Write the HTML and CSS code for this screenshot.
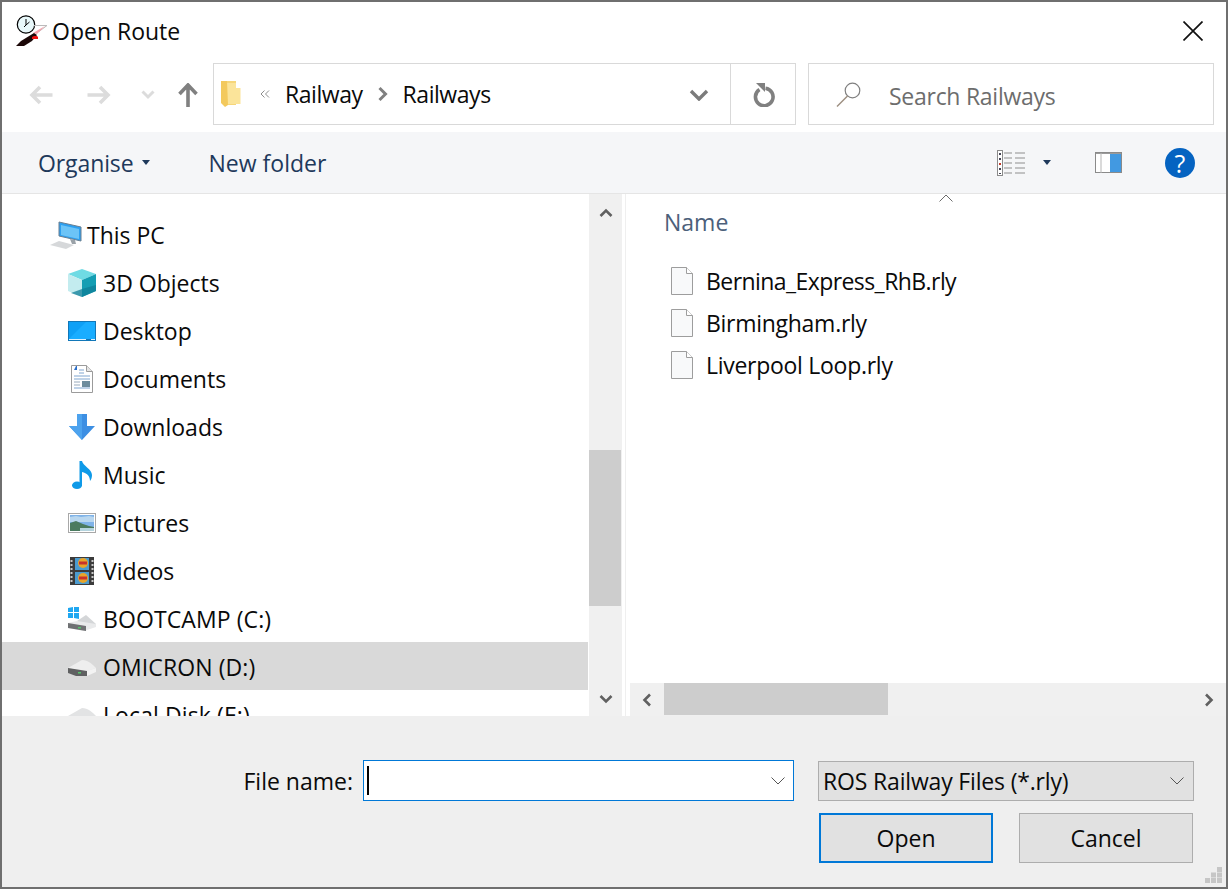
FILE: index.html
```html
<!DOCTYPE html>
<html>
  <head>
    <meta charset="utf-8">
    <title>Open Route</title>
    <link rel="stylesheet" href="styles.css">
  </head>
  <body>
    <div class="window">
      <header class="titlebar">
        <svg class="app-icon" width="32" height="32" viewBox="0 0 32 32">
          <circle cx="10" cy="9.500" r="8.700" fill="#e8f8fa" stroke="#000" stroke-width="1.200"/>
          <path d="M10 4v6l-2 2M10 10l3.500-3" stroke="#000" fill="none"/>
          <path d="M18 10.500h13l-8 6" fill="#fff" stroke="#bbb"/>
          <path d="M29 11l-8 8-4-1z" fill="#f5a3ad"/>
          <path d="M0 31l5-5 13-8 3 2-5 6-8 5z" fill="#1c0808"/>
          <path d="M18 21h3l1 1v2h-6v-2z" fill="#f01010"/>
        </svg>
        <span class="title">Open Route</span>
        <svg class="close" width="20" height="20" viewBox="0 0 20 20">
          <path d="M.5.500l19 19M19.500.500l-19 19" stroke="#111" stroke-width="1.700" fill="none"/>
        </svg>
      </header>

      <div class="navbar">
        <svg class="nav-arrow back" width="24" height="20" viewBox="0 0 24 20">
          <path d="M11 2l-8 8 8 8M3.500 10h20" stroke="#dcdcdc" stroke-width="3.600" fill="none"/>
        </svg>
        <svg class="nav-arrow forward" width="24" height="20" viewBox="0 0 24 20">
          <path d="M13 2l8 8-8 8M20.500 10H.5" stroke="#dcdcdc" stroke-width="3.600" fill="none"/>
        </svg>
        <svg class="nav-arrow recent" width="14" height="10" viewBox="0 0 14 10">
          <path d="M1.500 1.500L7 7l5.500-5.500" stroke="#dcdcdc" stroke-width="3" fill="none"/>
        </svg>
        <svg class="nav-arrow up" width="20" height="24" viewBox="0 0 20 24">
          <path d="M1.500 11L10 2l8.500 9M10 3v21" stroke="#808080" stroke-width="3.600" fill="none"/>
        </svg>

        <div class="address">
          <svg class="crumb-folder" width="20" height="28" viewBox="0 0 20 28">
            <path d="M0 1h15v24H4l-4-3z" fill="#f6d67a"/>
            <path d="M6 3h9v5h4.500v16H6z" fill="#fbe49a"/>
            <path d="M0 1h6l1 24-3 2-4-4z" fill="#f3c95d"/>
          </svg>
          <svg class="crumb-more" width="10" height="8" viewBox="0 0 10 8">
            <path d="M4.500.5L1 4l3.500 3.500M9 .5L5.500 4 9 7.500" stroke="#8d8d8d" fill="none"/>
          </svg>
          <span class="crumb">Railway</span>
          <svg class="crumb-sep" width="12" height="16" viewBox="0 0 12 16">
            <path d="M2.500 2l6 6-6 6" stroke="#808080" stroke-width="3" fill="none"/>
          </svg>
          <span class="crumb">Railways</span>
          <svg class="address-drop" width="20" height="12" viewBox="0 0 20 12">
            <path d="M2 2l8 8 8-8" stroke="#7b7b7b" stroke-width="3.400" fill="none"/>
          </svg>
          <div class="address-refresh">
            <svg width="22" height="24" viewBox="0 0 22 24">
              <path d="M6.500 6.500a8.800 8.800 0 1 0 6-1.300" stroke="#808080" stroke-width="3.600" fill="none"/>
              <path d="M3 0h9v9z" fill="#808080"/>
            </svg>
          </div>
        </div>

        <div class="search">
          <svg width="26" height="26" viewBox="0 0 26 26">
            <circle cx="16.500" cy="9.500" r="7.300" fill="none" stroke="#808080" stroke-width="1.200"/>
            <path d="M11.500 15L1 25.500" stroke="#9c8f80" stroke-width="1.400"/>
          </svg>
          <span class="search-text">Search Railways</span>
        </div>
      </div>

      <div class="toolbar">
        <span class="tool organise">Organise</span>
        <span class="tool-caret"></span>
        <span class="tool new-folder">New folder</span>
        <svg class="view-icon" width="28" height="26" viewBox="0 0 28 26">
          <rect x=".5" y=".5" width="5" height="25" fill="#fff" stroke="#8a8a8a"/>
          <path d="M2 3h2v2H2zM2 13h2v2H2zM2 18h2v2H2zM2 23h2v1H2zM2 8h2v2H2z" fill="#445"/>
          <path d="M2 13h2v2H2z" fill="#c0392b"/>
          <path d="M7 3h8M18 3h10M7 8h8M18 8h10M7 13h8M18 13h10M7 18h8M18 18h10M7 23h8M18 23h10" stroke="#8e8e8e" fill="none"/>
        </svg>
        <span class="tool-caret view-caret"></span>
        <svg class="pane-icon" width="28" height="22" viewBox="0 0 28 22">
          <rect x=".5" y=".5" width="26" height="20" fill="#fff" stroke="#8a8a8a"/>
          <rect x="15" y="2" width="11" height="18" fill="#4299e1"/>
          <rect x="1" y="1" width="25" height="1" fill="#9a9a9a"/>
          <path d="M6 1v20" stroke="#b5b5b5"/>
        </svg>
        <div class="help">?</div>
      </div>

      <main class="panes">
        <nav class="tree">
          <div class="tree-row root">
            <svg width="32" height="28" viewBox="0 0 32 28">
              <path d="M9 1l22 5v14L9 15z" fill="#2c9ff0" stroke="#6a7f90"/>
              <path d="M11 4l18 4v10l-18-4z" fill="#6cc4f7"/>
              <path d="M20 18l2 5h4l-1-4z" fill="#9aa2a8"/>
              <path d="M0 24l9-4 15 4-8 4z" fill="#d6d8da"/>
            </svg>
            <span>This PC</span>
          </div>
          <div class="tree-row">
            <svg width="28" height="28" viewBox="0 0 28 28">
              <path d="M14 0l14 5-14 6L0 5z" fill="#6fdbe4"/>
              <path d="M0 5l14 6v17L0 22z" fill="#c3ecef"/>
              <path d="M28 5l-14 6v17l14-6z" fill="#149eb3"/>
              <path d="M14 20l14-4v6l-14 6-11-4z" fill="#0d7d97" opacity=".75"/>
            </svg>
            <span>3D Objects</span>
          </div>
          <div class="tree-row">
            <svg width="28" height="20" viewBox="0 0 28 20">
              <rect width="28" height="20" fill="#1277b8"/>
              <rect x="1" y="1" width="26" height="17" fill="#0ea0f6"/>
              <path d="M1 18L18 1h9v17z" fill="#19adff"/>
              <path d="M1 18.500h17M23 18.500h4" stroke="#dff2ff"/>
            </svg>
            <span>Desktop</span>
          </div>
          <div class="tree-row">
            <svg width="22" height="28" viewBox="0 0 22 28">
              <path d="M.5.500h15l6 6v21H.5z" fill="#fff" stroke="#9b9b9b"/>
              <path d="M15.500.5v6h6" fill="#e4e4e4" stroke="#9b9b9b"/>
              <path d="M3 5l2-4h1v4z" fill="#2c6fc9"/>
              <path d="M8 5h5M8 8h5M3 11h16M3 14h16M3 23h16" stroke="#7fa5d0"/>
              <path d="M3 17h6M3 20h6" stroke="#9ab"/>
              <rect x="11" y="16" width="8" height="6" fill="#6e8d9d"/>
            </svg>
            <span>Documents</span>
          </div>
          <div class="tree-row">
            <svg width="26" height="26" viewBox="0 0 26 26">
              <path d="M8 0h10v12h8L13 26 0 12h8z" fill="#3d8fe3"/>
              <path d="M8 0h5v26L0 12h8z" fill="#4da3ee"/>
            </svg>
            <span>Downloads</span>
          </div>
          <div class="tree-row">
            <svg width="28" height="28" viewBox="0 0 28 28">
              <ellipse cx="9" cy="24.300" rx="5" ry="3.700" fill="#0f9ae8"/>
              <path d="M11.500 0H14c1 5 10 8 10 14 0 3-1 5-2 6 0-5-3-8-8-9v14h-2.500z" fill="#0f9ae8"/>
            </svg>
            <span>Music</span>
          </div>
          <div class="tree-row">
            <svg width="28" height="20" viewBox="0 0 28 20">
              <rect x=".5" y=".5" width="27" height="19" fill="#fff" stroke="#a8a8a8"/>
              <rect x="2" y="2" width="24" height="16" fill="#7fb3e8"/>
              <path d="M2 4l6-1 5 1 8-1 5 1v5H2z" fill="#b9d7ef"/>
              <path d="M2 10l6-2 7 3 6 2 5 1v4H2z" fill="#4b7b5f"/>
              <path d="M12 15h14v3H12z" fill="#b5d4de"/>
            </svg>
            <span>Pictures</span>
          </div>
          <div class="tree-row">
            <svg width="24" height="28" viewBox="0 0 24 28">
              <rect width="24" height="28" fill="#3b3b3b"/>
              <rect x="5" y="1" width="14" height="12" fill="#4b9bd0"/>
              <rect x="5" y="15" width="14" height="12" fill="#4b9bd0"/>
              <circle cx="13" cy="6" r="5" fill="#e8a52a"/>
              <path d="M9 6h8" stroke="#c9322b" stroke-width="3"/>
              <circle cx="13" cy="21" r="5" fill="#e8a52a"/>
              <path d="M9 21h8" stroke="#c9322b" stroke-width="3"/>
              <path d="M1.500 3v23M22.500 3v23" stroke="#c9c9c9" stroke-width="2" stroke-dasharray="2 2"/>
            </svg>
            <span>Videos</span>
          </div>
          <div class="tree-row drive">
            <svg width="28" height="24" viewBox="0 0 28 24">
              <path d="M0 1l5-1v5H0zM6 0l5-1v6H6zM0 6h5v5H0zM6 6h5v6L6 11z" fill="#1fa7f1"/>
              <path d="M9 14l9-6 10 9-12 3z" fill="#d4d6d8"/>
              <path d="M0 16l9-2 19 3v3l-12 4-16-3z" fill="#e9eaeb"/>
              <path d="M0 16l18 3v5L0 21z" fill="#6f7173"/>
              <rect x="10" y="20" width="3" height="1.500" fill="#55c46b"/>
            </svg>
            <span class="drive-name">BOOTCAMP (C:)</span>
          </div>
          <div class="tree-row drive selected">
            <svg width="28" height="17" viewBox="0 0 28 17">
              <path d="M0 9L14 1c6 0 10 4 14 8l-11 4z" fill="#eeeeee"/>
              <path d="M0 9l19 3v5H8L0 14z" fill="#5f6061"/>
              <path d="M28 9v4l-9 4v-5z" fill="#f3f3f3"/>
              <rect x="10" y="13" width="3" height="1.500" fill="#55c46b"/>
            </svg>
            <span class="drive-name">OMICRON (D:)</span>
          </div>
          <div class="tree-row drive">
            <svg width="28" height="17" viewBox="0 0 28 17">
              <path d="M0 9L14 1c6 0 10 4 14 8l-11 4z" fill="#e2e3e4"/>
              <path d="M0 9l19 3v5H8L0 14z" fill="#68696a"/>
            </svg>
            <span class="drive-name">Local Disk (E:)</span>
          </div>
        </nav>

        <div class="vscroll">
          <svg class="vscroll-up" width="14" height="10" viewBox="0 0 14 10">
            <path d="M1.500 8L7 2.500 12.500 8" stroke="#606060" stroke-width="2.600" fill="none"/>
          </svg>
          <div class="vscroll-thumb"></div>
          <svg class="vscroll-down" width="14" height="10" viewBox="0 0 14 10">
            <path d="M1.500 2L7 7.500 12.500 2" stroke="#606060" stroke-width="2.600" fill="none"/>
          </svg>
        </div>

        <section class="files">
          <div class="file-list">
            <svg class="sort-caret" width="14" height="8" viewBox="0 0 14 8">
              <path d="M.5 7.500L7 1l6.500 6.500" stroke="#6b6b6b" fill="none"/>
            </svg>
            <div class="col-name">Name</div>
            <div class="file">
              <svg width="22" height="28" viewBox="0 0 22 28">
                <path d="M.5.500h15l6 6v21H.5z" fill="#f8f9fa" stroke="#9d9d9d"/>
                <path d="M15.500.5v6h6" fill="#fff" stroke="#9d9d9d"/>
              </svg>
              <span class="file-long">Bernina_Express_RhB.rly</span>
            </div>
            <div class="file">
              <svg width="22" height="28" viewBox="0 0 22 28">
                <path d="M.5.500h15l6 6v21H.5z" fill="#f8f9fa" stroke="#9d9d9d"/>
                <path d="M15.500.5v6h6" fill="#fff" stroke="#9d9d9d"/>
              </svg>
              <span>Birmingham.rly</span>
            </div>
            <div class="file">
              <svg width="22" height="28" viewBox="0 0 22 28">
                <path d="M.5.500h15l6 6v21H.5z" fill="#f8f9fa" stroke="#9d9d9d"/>
                <path d="M15.500.5v6h6" fill="#fff" stroke="#9d9d9d"/>
              </svg>
              <span>Liverpool Loop.rly</span>
            </div>
          </div>
          <div class="hscroll">
            <svg width="10" height="14" viewBox="0 0 10 14">
              <path d="M8 1.500L2.500 7 8 12.500" stroke="#606060" stroke-width="2.600" fill="none"/>
            </svg>
            <div class="hscroll-thumb"></div>
            <svg class="hscroll-right" width="10" height="14" viewBox="0 0 10 14">
              <path d="M2 1.500L7.500 7 2 12.500" stroke="#606060" stroke-width="2.600" fill="none"/>
            </svg>
          </div>
        </section>
      </main>

      <footer class="footer">
        <div class="footer-row">
          <label class="name-label">File name:</label>
          <div class="name-box">
            <span class="text-caret"></span>
            <svg class="combo-arrow" width="14" height="8" viewBox="0 0 14 8">
              <path d="M.5.500L7 7 13.500.5" stroke="#555" fill="none"/>
            </svg>
          </div>
          <div class="type-box">
            <span class="type-text">ROS Railway Files (*.rly)</span>
            <svg class="combo-arrow" width="14" height="8" viewBox="0 0 14 8">
              <path d="M.5.500L7 7 13.500.5" stroke="#555" fill="none"/>
            </svg>
          </div>
        </div>
        <div class="footer-buttons">
          <button class="btn btn-default">Open</button>
          <button class="btn">Cancel</button>
        </div>
        <svg class="grip" width="17" height="16" viewBox="0 0 17 16">
          <path d="M12 0h5v5h-5zM6 5.500h5v5H6zM12 5.500h5v5h-5zM0 11h5v5H0zM6 11h5v5H6zM12 11h5v5h-5z" fill="#c6c6c6"/>
        </svg>
      </footer>
    </div>
  </body>
</html>
```

FILE: styles.css
```css
* {
  box-sizing: border-box;
}
html,
body {
  margin: 0;
  height: 100%;
}
body {
  font-family: "Open Sans", "Noto Sans", sans-serif;
  font-size: 23px;
  color: #0a0a0a;
  background: #fff;
}
svg {
  display: block;
  flex: none;
}
.window {
  position: relative;
  width: 1228px;
  height: 889px;
  border: 2px solid #6f6f6f;
  display: flex;
  flex-direction: column;
  overflow: hidden;
}

/* title bar */
.titlebar {
  height: 61px;
  display: flex;
  align-items: center;
  padding: 0 23px 0 14px;
}
.app-icon {
  margin-top: -3px;
}
.title {
  margin-left: 4px;
  padding-bottom: 4px;
  flex: 1;
}
.close {
  margin-top: -3px;
}

/* back / forward / address row */
.navbar {
  height: 62px;
  margin-bottom: 7px;
  display: flex;
  align-items: center;
}
.nav-arrow {
  margin-top: 2px;
}
.back {
  margin-left: 27px;
}
.forward {
  margin-left: 34px;
}
.recent {
  margin-left: 30px;
}
.up {
  margin-left: 23px;
}
.address {
  width: 583px;
  height: 62px;
  margin-left: 15px;
  border: 1px solid #d9d9d9;
  display: flex;
  align-items: center;
  padding-left: 7px;
}
.crumb-more {
  margin-left: 19px;
}
.crumb {
  margin-left: 15px;
  letter-spacing: -0.45px;
}
.crumb-sep {
  margin-left: 14px;
  margin-right: -1px;
}
.address-drop {
  margin-left: auto;
  margin-right: 21px;
  margin-top: 2px;
}
.address-refresh {
  width: 65px;
  height: 100%;
  border-left: 1px solid #d9d9d9;
  display: flex;
  align-items: center;
  justify-content: center;
  padding: 2px 0 0 1px;
}
.search {
  width: 406px;
  height: 62px;
  margin-left: 12px;
  border: 1px solid #d9d9d9;
  display: flex;
  align-items: center;
  padding-left: 27px;
}
.search-text {
  margin-left: 27px;
  padding-top: 4px;
  letter-spacing: -0.27px;
  color: #6d6d6d;
}

/* command bar */
.toolbar {
  height: 62px;
  background: #f5f6f8;
  border-bottom: 1px solid #e5e5e5;
  display: flex;
  align-items: center;
  padding-left: 36px;
  color: #1e395b;
}
.organise {
  letter-spacing: -0.1px;
}
.tool-caret {
  width: 0;
  height: 0;
  margin-left: 8px;
  border: 4.5px solid transparent;
  border-top: 5px solid #1e395b;
  border-bottom: 0;
}
.new-folder {
  margin-left: 59px;
}
.view-icon {
  margin-left: auto;
}
.view-caret {
  margin-left: 18px;
}
.pane-icon {
  margin-left: 44px;
}
.help {
  width: 30px;
  height: 30px;
  margin-left: 42px;
  margin-right: 31px;
  border-radius: 50%;
  background: #0563c1;
  color: #fff;
  font-size: 25px;
  font-weight: 400;
  line-height: 30px;
  text-align: center;
}

/* panes */
.panes {
  height: 522px;
  display: flex;
}
.tree {
  width: 586px;
  margin-right: 1px;
  padding-top: 16px;
  overflow: hidden;
}
.tree-row {
  height: 48px;
  display: flex;
  align-items: center;
  padding: 2px 0 0 66px;
}
.tree-row svg {
  margin-right: 7px;
}
.tree-row > svg {
  width: 28px;
  flex: none;
}
.tree-row.root {
  padding-left: 48px;
}
.tree-row.root > svg {
  width: 32px;
  margin-right: 5px;
}
.drive-name {
  letter-spacing: 0.1px;
}
.selected {
  background: #d9d9d9;
}
.vscroll {
  width: 33px;
  background: #f0f0f0;
  display: flex;
  flex-direction: column;
  align-items: center;
  padding-top: 14px;
}
.vscroll-thumb {
  width: 32px;
  height: 156px;
  margin-top: 232px;
  margin-left: -1px;
  background: #cdcdcd;
}
.vscroll-down {
  margin-top: 88px;
}
.files {
  flex: 1;
  margin-left: 3px;
  padding-left: 4px;
  border-left: 1px solid #efefef;
  display: flex;
  flex-direction: column;
}
.file-list {
  position: relative;
  flex: 1;
  padding: 9px 0 0 34px;
}
.sort-caret {
  position: absolute;
  top: 0;
  left: 309px;
}
.col-name {
  height: 38px;
  margin-bottom: 19px;
  line-height: 38px;
  color: #4c607a;
}
.file {
  height: 42px;
  display: flex;
  align-items: center;
  padding-left: 7px;
  letter-spacing: -0.28px;
}
.file-long {
  letter-spacing: -0.57px;
}
.file svg {
  margin-right: 13px;
}
.hscroll {
  height: 33px;
  background: #f0f0f0;
  display: flex;
  align-items: center;
  padding-left: 12px;
}
.hscroll-thumb {
  width: 224px;
  height: 32px;
  margin-left: 12px;
  align-self: flex-start;
  background: #cdcdcd;
}
.hscroll-right {
  margin-left: auto;
  margin-right: 12px;
}

/* file name + buttons */
.footer {
  position: relative;
  flex: 1;
  background: #efefef;
  padding-top: 44px;
}
.footer-row {
  display: flex;
  align-items: center;
}
.name-label {
  width: 351px;
  text-align: right;
}
.name-box {
  width: 431px;
  height: 41px;
  margin-left: 10px;
  border: 1px solid #0078d7;
  background: #fff;
  display: flex;
  align-items: center;
  justify-content: space-between;
  padding: 0 8px 0 3px;
}
.text-caret {
  width: 2px;
  height: 29px;
  background: #000;
}
.type-box {
  width: 376px;
  height: 40px;
  margin-left: 24px;
  border: 1px solid #adadad;
  background: #e1e1e1;
  display: flex;
  align-items: center;
  justify-content: space-between;
  padding: 0 9px 0 4px;
}
.type-text {
  letter-spacing: -0.17px;
}
.footer-buttons {
  display: flex;
  gap: 26px;
  margin: 12px 0 0 817px;
}
.btn {
  width: 174px;
  height: 50px;
  border: 1px solid #adadad;
  background: #e1e1e1;
  font: inherit;
  color: inherit;
  padding: 0;
}
.btn-default {
  border: 2px solid #0078d7;
}
.grip {
  position: absolute;
  right: 4px;
  bottom: 4px;
}
```
